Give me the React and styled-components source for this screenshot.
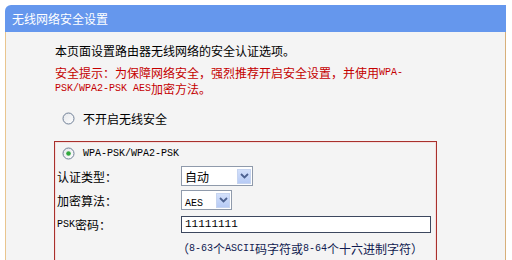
import styled, { createGlobalStyle } from "styled-components";

const GlobalStyle = createGlobalStyle`
  html, body {
    margin: 0;
    padding: 0;
    background: #fff;
  }
  body {
    font-family: "Noto Sans CJK SC", "Liberation Sans", sans-serif;
    font-size: 12px;
    color: #000;
  }
`;

const Page = styled.div`
  padding: 5px 6px 0 5px;
  height: 255px;
  overflow: hidden;
`;

const Header = styled.div`
  height: 27px;
  background: #6597ed;
  border-top-left-radius: 6px;
  color: #fff;
  display: flex;
  align-items: center;
  padding-left: 7px;
  font-size: 12px;
`;

const Body = styled.div`
  background: #f4f4f4;
  border-left: 1px solid #e9c58e;
  border-right: 1px solid #d8b07a;
  padding: 10px 0 0 49px;
  height: 240px;
`;

const Line = styled.div`
  height: ${(p) => p.$h || 17}px;
  display: flex;
  align-items: center;
  white-space: nowrap;
  color: ${(p) => (p.$warn ? "#c40000" : "inherit")};
`;

const Warn = styled.div`
  margin-top: 5px;
`;

const Asc = styled.span`
  font-family: "Liberation Mono", monospace;
  font-size: 10px;
`;

const Option = styled.div`
  display: flex;
  align-items: center;
  gap: 8px;
  height: ${(p) => p.$h || 17}px;
  padding-left: ${(p) => p.$indent}px;
  margin-top: ${(p) => p.$top || 0}px;
`;

const Box = styled.div`
  margin: 14px 0 0 -1px;
  width: 383px;
  box-sizing: border-box;
  border: 1px solid #a8302c;
  box-shadow: inset 0 0 0 1px #f6dede;
  padding: 1px 0 12px 2px;
`;

const Form = styled.div`
  display: grid;
  grid-template-columns: 124px 1fr;
  grid-auto-rows: 24px;
  align-items: center;
`;

const Label = styled.div`
  display: flex;
  align-items: center;
  height: 17px;
`;

const SelectBox = styled.div`
  width: ${(p) => p.$w}px;
  height: 20px;
  box-sizing: border-box;
  border: 1px solid #8f9aab;
  background: #fff;
  display: flex;
  align-items: center;
  justify-content: space-between;
  padding-left: 3px;
`;

const Arrow = styled.span`
  width: 14px;
  height: 15px;
  margin-right: 1px;
  background: linear-gradient(#d3e0fb, #b7cbf5);
  border: 1px solid #c6d4f0;
  box-sizing: border-box;
  display: flex;
  align-items: center;
  justify-content: center;
`;

const TextInput = styled.input`
  width: 250px;
  height: 17px;
  box-sizing: border-box;
  border: 1px solid #3c475e;
  background: #fff;
  padding: 0 0 0 3px;
  margin: 0;
  font-family: "Liberation Mono", monospace;
  font-size: 11px;
  color: #000;
  outline: none;
`;

const Hint = styled.div`
  grid-column: 2;
  display: flex;
  align-items: center;
  height: 17px;
  margin-left: -4px;
  color: #101a50;
  white-space: nowrap;
`;

const Radio = ({ checked }) => (
  <svg width="13" height="13" viewBox="0 0 13 13">
    <defs>
      <linearGradient id="rg" x1="0" y1="0" x2="1" y2="1">
        <stop offset="0" stopColor="#e4e6ea" />
        <stop offset="1" stopColor="#ffffff" />
      </linearGradient>
    </defs>
    <circle cx="6.5" cy="6.5" r="5.5" fill="url(#rg)" stroke="#6f7f96" />
    {checked && <circle cx="6.5" cy="6.5" r="2.3" fill="#32a83e" />}
  </svg>
);

const Select = ({ w, children }) => (
  <SelectBox $w={w}>
    <span>{children}</span>
    <Arrow>
      <svg width="9" height="6" viewBox="0 0 9 6">
        <path d="M1 1 L4.5 4.5 L8 1" fill="none" stroke="#4d6290" strokeWidth="1.8" />
      </svg>
    </Arrow>
  </SelectBox>
);

export default function App() {
  return (
    <>
      <GlobalStyle />
      <Page>
        <Header>无线网络安全设置</Header>
        <Body>
          <Line>本页面设置路由器无线网络的安全认证选项。</Line>
          <Warn>
            <Line $warn $h={16}>
              安全提示：为保障网络安全，强烈推荐开启安全设置，并使用<Asc>WPA-</Asc>
            </Line>
            <Line $warn $h={16}>
              <Asc>PSK/WPA2-PSK AES</Asc>加密方法。
            </Line>
          </Warn>
          <Option $indent={7} $top={14}>
            <Radio />
            <span>不开启无线安全</span>
          </Option>
          <Box>
            <Option $indent={5} $h={21}>
              <Radio checked />
              <Asc>WPA-PSK/WPA2-PSK</Asc>
            </Option>
            <Form>
              <Label>认证类型：</Label>
              <Select w={72}>自动</Select>
              <Label>加密算法：</Label>
              <Select w={51}>
                <Asc>AES</Asc>
              </Select>
              <Label>
                <Asc>PSK</Asc>密码：
              </Label>
              <TextInput defaultValue="11111111" readOnly />
              <Hint>
                （<Asc>8-63</Asc>个<Asc>ASCII</Asc>码字符或<Asc>8-64</Asc>个十六进制字符）
              </Hint>
            </Form>
          </Box>
        </Body>
      </Page>
    </>
  );
}
